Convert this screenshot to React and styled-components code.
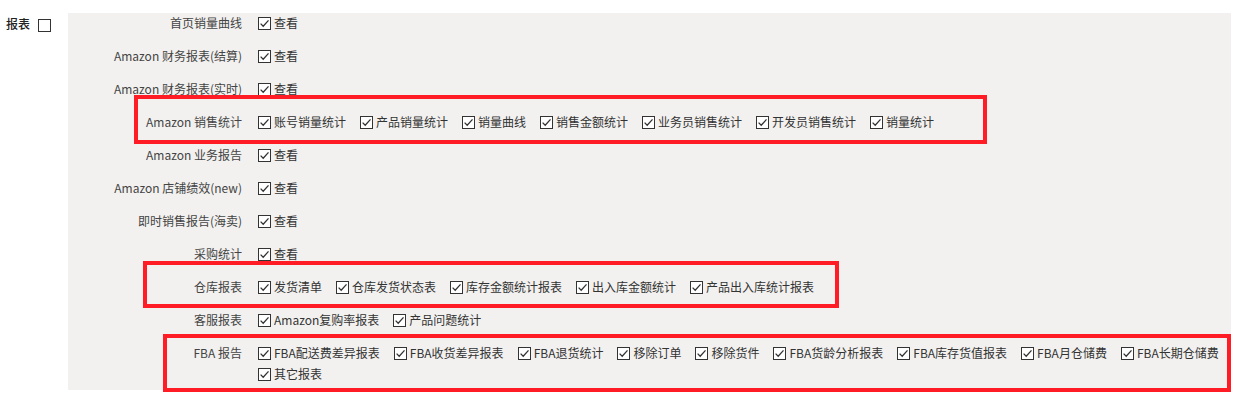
import styled, { createGlobalStyle } from "styled-components";

const GlobalStyle = createGlobalStyle`
  html, body {
    margin: 0;
    padding: 0;
    background: #fff;
  }
  body {
    font-family: "Noto Sans CJK SC", "Noto Sans", sans-serif;
    font-size: 12px;
    color: #333;
  }
`;

const Page = styled.div`
  position: relative;
  display: flex;
  align-items: flex-start;
  width: 1248px;
  height: 402px;
  padding-top: 13px;
  box-sizing: border-box;
`;

const Group = styled.div`
  width: 68px;
  padding-left: 6px;
  box-sizing: border-box;
  display: flex;
  align-items: center;
  height: 20px;
  gap: 8px;
  color: #222;
  font-weight: 500;
`;

const Panel = styled.div`
  width: 1163px;
  background: #f2f1ef;
  padding: 0 6px 5px 0;
  box-sizing: border-box;
  display: flex;
  flex-direction: column;
  gap: 12px;
`;

const Row = styled.div`
  display: flex;
  align-items: flex-start;
  gap: 16px;
  line-height: 19px;
`;

const Label = styled.div`
  width: 174px;
  height: 21px;
  flex: none;
  text-align: right;
  color: #444;
  white-space: nowrap;
`;

const Items = styled.div`
  flex: 1;
  display: flex;
  flex-wrap: wrap;
  column-gap: 14px;
`;

const Item = styled.label`
  display: inline-flex;
  align-items: flex-start;
  gap: 3px;
  height: 21px;
  white-space: nowrap;
  color: #333;
`;

const Box = styled.svg`
  display: block;
  flex: none;
  width: 13px;
  height: 13px;
  margin-top: 4px;
`;

const Highlight = styled.div`
  position: absolute;
  border: 4px solid #ff1c24;
  box-sizing: border-box;
  pointer-events: none;
`;

const CheckBox = ({ checked = true }) => (
  <Box viewBox="0 0 13 13">
    <rect x="0.5" y="0.5" width="12" height="12" fill="#fff" stroke="#333" />
    {checked && (
      <path d="M2.6 6.6 L5.2 9.3 L10.5 3.4" fill="none" stroke="#333" strokeWidth="1.3" />
    )}
  </Box>
);

const rows = [
  { label: "首页销量曲线", items: ["查看"] },
  { label: "Amazon 财务报表(结算)", items: ["查看"] },
  { label: "Amazon 财务报表(实时)", items: ["查看"] },
  {
    label: "Amazon 销售统计",
    items: ["账号销量统计", "产品销量统计", "销量曲线", "销售金额统计", "业务员销售统计", "开发员销售统计", "销量统计"],
  },
  { label: "Amazon 业务报告", items: ["查看"] },
  { label: "Amazon 店铺绩效(new)", items: ["查看"] },
  { label: "即时销售报告(海卖)", items: ["查看"] },
  { label: "采购统计", items: ["查看"] },
  {
    label: "仓库报表",
    items: ["发货清单", "仓库发货状态表", "库存金额统计报表", "出入库金额统计", "产品出入库统计报表"],
  },
  { label: "客服报表", items: ["Amazon复购率报表", "产品问题统计"] },
  {
    label: "FBA 报告",
    items: [
      "FBA配送费差异报表",
      "FBA收货差异报表",
      "FBA退货统计",
      "移除订单",
      "移除货件",
      "FBA货龄分析报表",
      "FBA库存货值报表",
      "FBA月仓储费",
      "FBA长期仓储费",
      "其它报表",
    ],
  },
];

// red annotation frames drawn over the form
const marks = [
  { left: 134, top: 95, width: 853, height: 49 },
  { left: 143, top: 261, width: 696, height: 47 },
  { left: 163, top: 334, width: 1068, height: 58 },
];

export default function App() {
  return (
    <>
      <GlobalStyle />
      <Page>
        <Group>
          报表
          <CheckBox checked={false} />
        </Group>
        <Panel>
          {rows.map((row) => (
            <Row key={row.label}>
              <Label>{row.label}</Label>
              <Items>
                {row.items.map((item) => (
                  <Item key={item}>
                    <CheckBox />
                    {item}
                  </Item>
                ))}
              </Items>
            </Row>
          ))}
        </Panel>
        {marks.map((m, i) => (
          <Highlight key={i} style={{ left: m.left, top: m.top, width: m.width, height: m.height }} />
        ))}
      </Page>
    </>
  );
}
